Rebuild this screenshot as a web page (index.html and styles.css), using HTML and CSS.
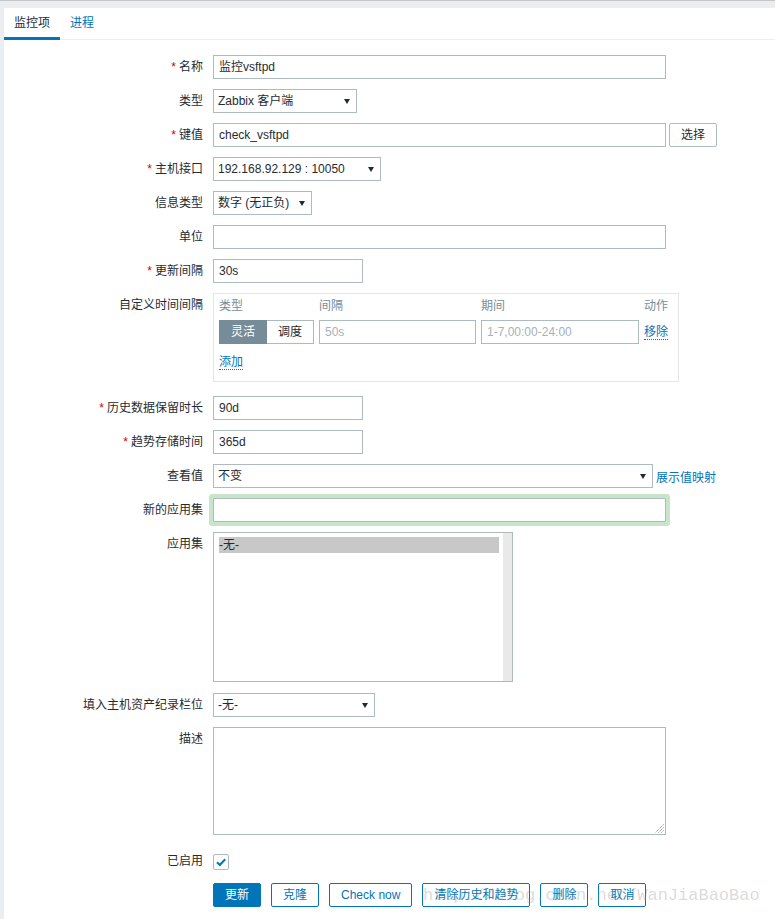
FILE: index.html
```html
<!DOCTYPE html>
<html lang="zh-CN">
<head>
<meta charset="utf-8">
<title>监控项</title>
<link rel="stylesheet" href="styles.css">
</head>
<body>
<div class="page">
  <div class="panel">
    <ul class="tabs">
      <li class="tab active">监控项</li>
      <li class="tab link">进程</li>
    </ul>
    <div class="form">
      <div class="row">
        <div class="lbl"><span class="req">*</span>名称</div>
        <div class="field"><div class="input w453">监控vsftpd</div></div>
      </div>
      <div class="row">
        <div class="lbl">类型</div>
        <div class="field"><div class="select w144">Zabbix 客户端</div></div>
      </div>
      <div class="row">
        <div class="lbl"><span class="req">*</span>键值</div>
        <div class="field"><div class="input w453">check_vsftpd</div><div class="btn-grey">选择</div></div>
      </div>
      <div class="row">
        <div class="lbl"><span class="req">*</span>主机接口</div>
        <div class="field"><div class="select w168">192.168.92.129 : 10050</div></div>
      </div>
      <div class="row">
        <div class="lbl">信息类型</div>
        <div class="field"><div class="select w99">数字 (无正负)</div></div>
      </div>
      <div class="row">
        <div class="lbl">单位</div>
        <div class="field"><div class="input w453"></div></div>
      </div>
      <div class="row">
        <div class="lbl"><span class="req">*</span>更新间隔</div>
        <div class="field"><div class="input w150">30s</div></div>
      </div>
      <div class="row row-interval">
        <div class="lbl">自定义时间间隔</div>
        <div class="field">
          <div class="interval">
            <div class="ih">类型</div>
            <div class="ih">间隔</div>
            <div class="ih">期间</div>
            <div class="ih">动作</div>
            <div class="seg"><span class="seg-on">灵活</span><span class="seg-off">调度</span></div>
            <div class="input ph">50s</div>
            <div class="input ph">1-7,00:00-24:00</div>
            <div class="act"><span class="dlink">移除</span></div>
            <div class="add"><span class="dlink">添加</span></div>
          </div>
        </div>
      </div>
      <div class="row">
        <div class="lbl"><span class="req">*</span>历史数据保留时长</div>
        <div class="field"><div class="input w150">90d</div></div>
      </div>
      <div class="row">
        <div class="lbl"><span class="req">*</span>趋势存储时间</div>
        <div class="field"><div class="input w150">365d</div></div>
      </div>
      <div class="row">
        <div class="lbl">查看值</div>
        <div class="field"><div class="select w440">不变</div><span class="link">展示值映射</span></div>
      </div>
      <div class="row">
        <div class="lbl">新的应用集</div>
        <div class="field"><div class="input w453 focus"></div></div>
      </div>
      <div class="row row-list">
        <div class="lbl">应用集</div>
        <div class="field">
          <div class="listbox">
            <div class="list-body"><div class="opt-sel">-无-</div></div>
            <div class="track"></div>
          </div>
        </div>
      </div>
      <div class="row">
        <div class="lbl">填入主机资产纪录栏位</div>
        <div class="field"><div class="select w162">-无-</div></div>
      </div>
      <div class="row row-desc">
        <div class="lbl">描述</div>
        <div class="field">
          <div class="textarea">
            <svg class="grip" width="9" height="9" viewBox="0 0 9 9"><path d="M8.5 0.5 L0.5 8.5 M8.5 3.5 L3.5 8.5 M8.5 6.5 L6.5 8.5" stroke="#6f6f6f" stroke-width="1" stroke-dasharray="1 1" fill="none"/></svg>
          </div>
        </div>
      </div>
      <div class="row">
        <div class="lbl">已启用</div>
        <div class="field">
          <div class="checkbox"><svg width="14" height="14" viewBox="0 0 14 14"><path d="M3 7.2 L5.8 10 L11.2 4.2" stroke="#0275b8" stroke-width="2" fill="none"/></svg></div>
        </div>
      </div>
      <div class="row">
        <div class="lbl"></div>
        <div class="field buttons">
          <div class="btn primary">更新</div>
          <div class="btn">克隆</div>
          <div class="btn">Check now</div>
          <div class="btn wide">清除历史和趋势</div>
          <div class="btn">删除</div>
          <div class="btn">取消</div>
        </div>
      </div>
    </div>
  </div>
</div>
<div class="watermark">http://blog.csdn.net/WanJiaBaoBao</div>
</body>
</html>
```
FILE: styles.css
```css
html, body {
  margin: 0;
  padding: 0;
}
body {
  background: #ebeef0;
  font-family: "Liberation Sans", "Noto Sans CJK SC", sans-serif;
  font-size: 12px;
  color: #1f2c33;
  overflow: hidden;
}
.page {
  border-top: 1px solid #c4c4c4;
  padding: 7px 0 0 4px;
  height: 911px;
}
.panel {
  background: #fff;
  height: 100%;
}
.tabs {
  list-style: none;
  margin: 0;
  padding: 0;
  display: flex;
  border-bottom: 1px solid #ebeef0;
}
.tab {
  padding: 7px 10px 6px;
  line-height: 16px;
  border-bottom: 3px solid transparent;
  margin-bottom: -1px;
}
.tab.active {
  border-bottom-color: #0275b8;
}
.tab.link {
  color: #0275b8;
}
.form {
  padding-top: 15px;
}
.row {
  display: grid;
  grid-template-columns: 199px 1fr;
  column-gap: 10px;
  margin-bottom: 10px;
}
.row-interval { margin-bottom: 14px; }
.row-list { margin-bottom: 11px; }
.row-desc { margin-bottom: 14px; }
.lbl {
  text-align: right;
  line-height: 24px;
  white-space: nowrap;
}
.req {
  color: #d40000;
  margin-right: 3px;
}
.field {
  display: flex;
  align-items: center;
  gap: 3px;
}
.input, .select {
  box-sizing: border-box;
  height: 24px;
  border: 1px solid #acbbc2;
  padding: 0 5px;
  line-height: 22px;
  white-space: nowrap;
  overflow: hidden;
  background: #fff;
}
.select {
  position: relative;
  padding: 0 18px 0 4px;
}
.select::after {
  content: "";
  position: absolute;
  right: 6px;
  top: 9px;
  border-left: 3px solid transparent;
  border-right: 3px solid transparent;
  border-top: 5px solid #1f2c33;
}
.w453 { width: 453px; }
.w440 { width: 440px; }
.w168 { width: 168px; }
.w162 { width: 162px; }
.w150 { width: 150px; }
.w144 { width: 144px; }
.w99 { width: 99px; }
.focus {
  box-shadow: 0 0 0 4px #c8e5ca;
  border-radius: 1px;
}
.btn-grey {
  box-sizing: border-box;
  height: 24px;
  width: 48px;
  border: 1px solid #acbbc2;
  border-radius: 2px;
  text-align: center;
  line-height: 22px;
  background: #fff;
}
.link { color: #0275b8; }
.interval {
  box-sizing: border-box;
  width: 466px;
  height: 89px;
  border: 1px solid #e3e7ea;
  padding: 4px 5px;
  display: grid;
  grid-template-columns: 95px 157px 158px auto;
  grid-template-rows: 16px 24px 16px;
  column-gap: 5px;
  row-gap: 6px;
  align-content: start;
}
.ih {
  color: #768d99;
  line-height: 16px;
}
.interval .ph {
  color: #a5b2b9;
  width: auto;
}
.seg {
  display: flex;
  height: 24px;
}
.seg span {
  box-sizing: border-box;
  height: 24px;
  line-height: 22px;
  text-align: center;
  border: 1px solid #acbbc2;
}
.seg-on {
  width: 48px;
  background: #768d99;
  border-color: #768d99 !important;
  color: #fff;
}
.seg-off {
  width: 47px;
  border-left: none !important;
}
.act {
  line-height: 24px;
}
.dlink {
  color: #0275b8;
  border-bottom: 1px dotted #0275b8;
  line-height: 14px;
  display: inline-block;
}
.add {
  grid-column: 1 / span 4;
  margin-top: 4px;
  line-height: 16px;
}
.listbox {
  box-sizing: border-box;
  width: 300px;
  height: 150px;
  border: 1px solid #acbbc2;
  display: flex;
}
.list-body {
  flex: 1;
  padding: 4px 4px 0 5px;
}
.opt-sel {
  background: #c8c8c8;
  line-height: 16px;
  height: 16px;
}
.track {
  width: 9px;
  background: #e9e9e9;
}
.textarea {
  box-sizing: border-box;
  width: 453px;
  height: 108px;
  border: 1px solid #acbbc2;
  position: relative;
}
.grip {
  position: absolute;
  right: 1px;
  bottom: 1px;
}
.checkbox {
  box-sizing: border-box;
  width: 16px;
  height: 16px;
  border: 1px solid #acbbc2;
  border-radius: 2px;
  display: flex;
  align-items: center;
  justify-content: center;
  margin-top: 1px;
}
.checkbox svg { display: block; }
.buttons { gap: 10px; }
.btn {
  box-sizing: border-box;
  height: 24px;
  padding: 0 11px;
  border: 1px solid #0275b8;
  border-radius: 2px;
  line-height: 22px;
  color: #0275b8;
  background: #fff;
  white-space: nowrap;
  text-align: center;
}
.btn.wide {
  width: 108px;
  padding: 0;
}
.btn.primary {
  background: #0275b8;
  color: #fff;
}
.watermark {
  position: absolute;
  left: 423px;
  top: 886px;
  font-family: "Liberation Mono", monospace;
  font-size: 17px;
  line-height: 20px;
  color: rgba(150, 150, 150, 0.35);
  white-space: nowrap;
  pointer-events: none;
}
```
